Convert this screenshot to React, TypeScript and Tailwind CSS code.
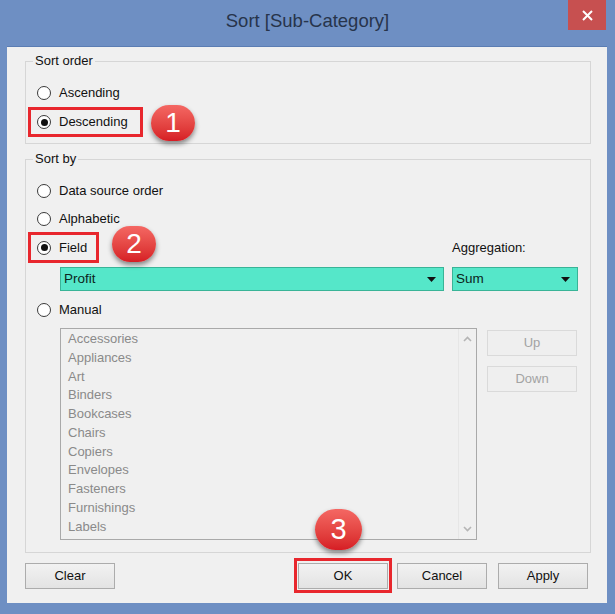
import React from "react";

const items = [
  "Accessories",
  "Appliances",
  "Art",
  "Binders",
  "Bookcases",
  "Chairs",
  "Copiers",
  "Envelopes",
  "Fasteners",
  "Furnishings",
  "Labels",
  "Lamps",
];

function Radio({ checked = false }: { checked?: boolean }) {
  return (
    <span className="flex h-[14px] w-[14px] shrink-0 items-center justify-center rounded-full border border-[#3a3a3a] bg-white">
      {checked ? <span className="h-[7px] w-[7px] rounded-full bg-[#111]" /> : null}
    </span>
  );
}

function Caret() {
  return (
    <svg width="9" height="5" viewBox="0 0 9 5" className="shrink-0">
      <path d="M0 0H9L4.5 5Z" fill="#111" />
    </svg>
  );
}

function Dropdown({ label, className }: { label: string; className: string }) {
  return (
    <div
      className={`flex h-[24px] items-center justify-between border border-[#39b497] bg-[#55e7c9] pl-[3px] pr-[7px] text-[13.5px] text-[#0c2520] ${className}`}
    >
      <span>{label}</span>
      <Caret />
    </div>
  );
}

function Button({ label, disabled = false, className = "" }: { label: string; disabled?: boolean; className?: string }) {
  return (
    <div
      className={`flex h-[26px] w-[90px] items-center justify-center border text-[13px] ${
        disabled
          ? "border-[#dadada] bg-[#efefef] text-[#a3a3a3]"
          : "border-[#acacac] bg-linear-to-b from-[#f2f2f2] to-[#e3e3e3] text-[#111]"
      } ${className}`}
    >
      {label}
    </div>
  );
}

export default function App() {
  return (
    <div className="relative flex h-[614px] w-[615px] flex-col bg-[#6e8fc3] font-['Liberation_Sans',Arial,sans-serif] text-[13px] text-[#111]">
      {/* title bar */}
      <div className="relative flex h-[46px] items-center justify-center pb-[4px]">
        <span className="text-[18.5px] text-[#27344b]">Sort [Sub-Category]</span>
        <div className="absolute right-[9px] top-0 flex h-[30px] w-[38px] items-center justify-center bg-[#c75050]">
          <svg width="11" height="11" viewBox="0 0 11 11">
            <path d="M1 1L10 10M10 1L1 10" stroke="#fff" strokeWidth="2" />
          </svg>
        </div>
      </div>

      {/* client area */}
      <div className="ml-[7px] mr-[8px] flex h-[557px] flex-col border-t border-[#5b7db3] bg-[#f0f0f0] pt-[14px]">
        {/* Sort order */}
        <div className="relative ml-[18px] mr-[16px] h-[83px] border border-[#d6d6d6] pt-[16px]">
          <span className="absolute -top-[9px] left-[7px] bg-[#f0f0f0] px-[2px] leading-[16px]">Sort order</span>
          <div className="flex h-[29px] items-center gap-[8px] pl-[11px]">
            <Radio />
            <span>Ascending</span>
          </div>
          <div className="ml-[2px] inline-flex h-[30px] items-center gap-[8px] border-[3px] border-[#e8272d] pl-[6px] pr-[12px]">
            <Radio checked />
            <span>Descending</span>
          </div>
        </div>

        {/* Sort by */}
        <div className="relative ml-[18px] mr-[16px] mt-[15px] flex h-[394px] flex-col border border-[#d6d6d6] pt-[17px]">
          <span className="absolute -top-[9px] left-[7px] bg-[#f0f0f0] px-[2px] leading-[16px]">Sort by</span>
          <div className="flex h-[28px] items-center gap-[8px] pl-[11px]">
            <Radio />
            <span>Data source order</span>
          </div>
          <div className="flex h-[27px] items-center gap-[8px] pl-[11px]">
            <Radio />
            <span>Alphabetic</span>
          </div>
          <div className="flex h-[31px] items-center">
            <div className="ml-[2px] flex h-[31px] items-center gap-[8px] border-[3px] border-[#e8272d] pl-[6px] pr-[9px]">
              <Radio checked />
              <span>Field</span>
            </div>
            <div className="flex-1" />
            <span className="mr-[12px] w-[126px]">Aggregation:</span>
          </div>
          <div className="mt-[4px] flex gap-[8px] pl-[34px] pr-[12px]">
            <Dropdown label="Profit" className="flex-1" />
            <Dropdown label="Sum" className="w-[126px]" />
          </div>
          <div className="mt-[5px] flex h-[28px] items-center gap-[8px] pl-[11px]">
            <Radio />
            <span>Manual</span>
          </div>
          <div className="mt-[4px] flex gap-[10px] pl-[34px] pr-[13px]">
            <div className="flex h-[212px] flex-1 overflow-hidden border border-[#a9a9a9] bg-[#f0f0f0]">
              <div className="flex-1 overflow-hidden pl-[7px] pt-[1px] text-[#8a8a8a]">
                {items.map((it) => (
                  <div key={it} className="leading-[18.75px]">
                    {it}
                  </div>
                ))}
              </div>
              <div className="flex w-[18px] flex-col items-center justify-between border-l border-[#e6e6e6] py-[7px]">
                <svg width="9" height="6" viewBox="0 0 9 6">
                  <path d="M1 5L4.5 1.5L8 5" fill="none" stroke="#b5b5b5" strokeWidth="1.6" />
                </svg>
                <svg width="9" height="6" viewBox="0 0 9 6">
                  <path d="M1 1L4.5 4.5L8 1" fill="none" stroke="#b5b5b5" strokeWidth="1.6" />
                </svg>
              </div>
            </div>
            <div className="flex flex-col gap-[10px] pt-[2px]">
              <Button label="Up" disabled />
              <Button label="Down" disabled />
            </div>
          </div>
        </div>

        {/* footer buttons */}
        <div className="mt-[5px] flex h-[35px] items-center pl-[18px] pr-[19px]">
          <Button label="Clear" />
          <div className="flex-1" />
          <div className="flex h-[35px] w-[98px] items-center justify-center border-[3px] border-[#e8272d]">
            <Button label="OK" className="w-[90px]" />
          </div>
          <Button label="Cancel" className="ml-[5px]" />
          <Button label="Apply" className="ml-[11px]" />
        </div>
      </div>

      {/* numbered callouts */}
      <div className="absolute left-[151px] top-[105px] flex h-[36px] w-[44px] items-center justify-center rounded-full bg-linear-to-b from-[#f46763] to-[#d61c24] text-[28px] leading-none text-white shadow-[0_3px_5px_rgba(0,0,0,0.45)]">
        1
      </div>
      <div className="absolute left-[112px] top-[226px] flex h-[36px] w-[44px] items-center justify-center rounded-full bg-linear-to-b from-[#f46763] to-[#d61c24] text-[28px] leading-none text-white shadow-[0_3px_5px_rgba(0,0,0,0.45)]">
        2
      </div>
      <div className="absolute left-[315px] top-[509px] flex h-[41px] w-[47px] items-center justify-center rounded-full bg-linear-to-b from-[#f46763] to-[#d61c24] text-[29px] leading-none text-white shadow-[0_3px_5px_rgba(0,0,0,0.45)]">
        3
      </div>
    </div>
  );
}
